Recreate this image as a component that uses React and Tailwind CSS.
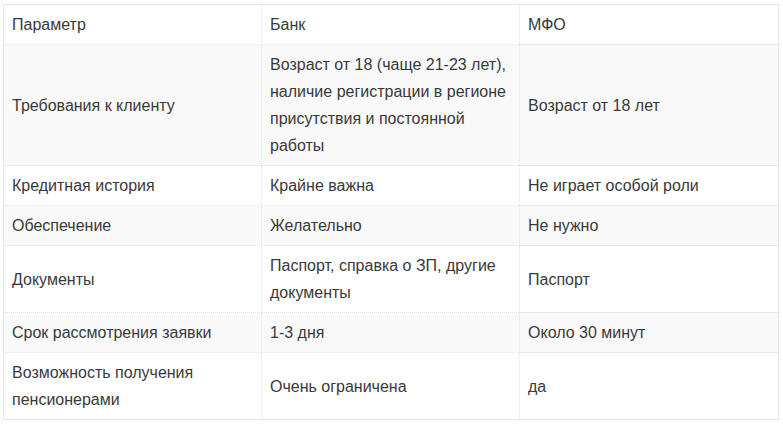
import React from "react";

const rows = [
  ["Параметр", "Банк", "МФО"],
  ["Требования к клиенту", "Возраст от 18 (чаще 21-23 лет), наличие регистрации в регионе присутствия и постоянной работы", "Возраст от 18 лет"],
  ["Кредитная история", "Крайне важна", "Не играет особой роли"],
  ["Обеспечение", "Желательно", "Не нужно"],
  ["Документы", "Паспорт, справка о ЗП, другие документы", "Паспорт"],
  ["Срок рассмотрения заявки", "1-3 дня", "Около 30 минут"],
  ["Возможность получения пенсионерами", "Очень ограничена", "да"],
];

export default function App() {
  return (
    <div className="w-[783px] h-[425px] bg-white pt-[4px] pl-[3px]" style={{ fontFamily: '"Liberation Sans", Arial, sans-serif' }}>
      <table className="table-fixed w-[775px] border-collapse border border-[#e6e6e6] text-[16px] leading-[27px] text-[#3a3a3a]">
        <colgroup>
          <col className="w-[258px]" />
          <col className="w-[258px]" />
          <col className="w-[259px]" />
        </colgroup>
        <tbody>
          {rows.map((r, i) => (
            <tr key={i} className={i % 2 === 1 ? "bg-[#f9f9f9]" : "bg-white"}>
              {r.map((c, j) => (
                <td
                  key={j}
                  className={
                    "px-[8px] py-[6px] align-middle border-b border-b-[#e6e6e6] " +
                    (j < 2 ? "border-r border-r-[#e3e3e3] border-dotted" : "")
                  }
                >
                  {c}
                </td>
              ))}
            </tr>
          ))}
        </tbody>
      </table>
    </div>
  );
}
